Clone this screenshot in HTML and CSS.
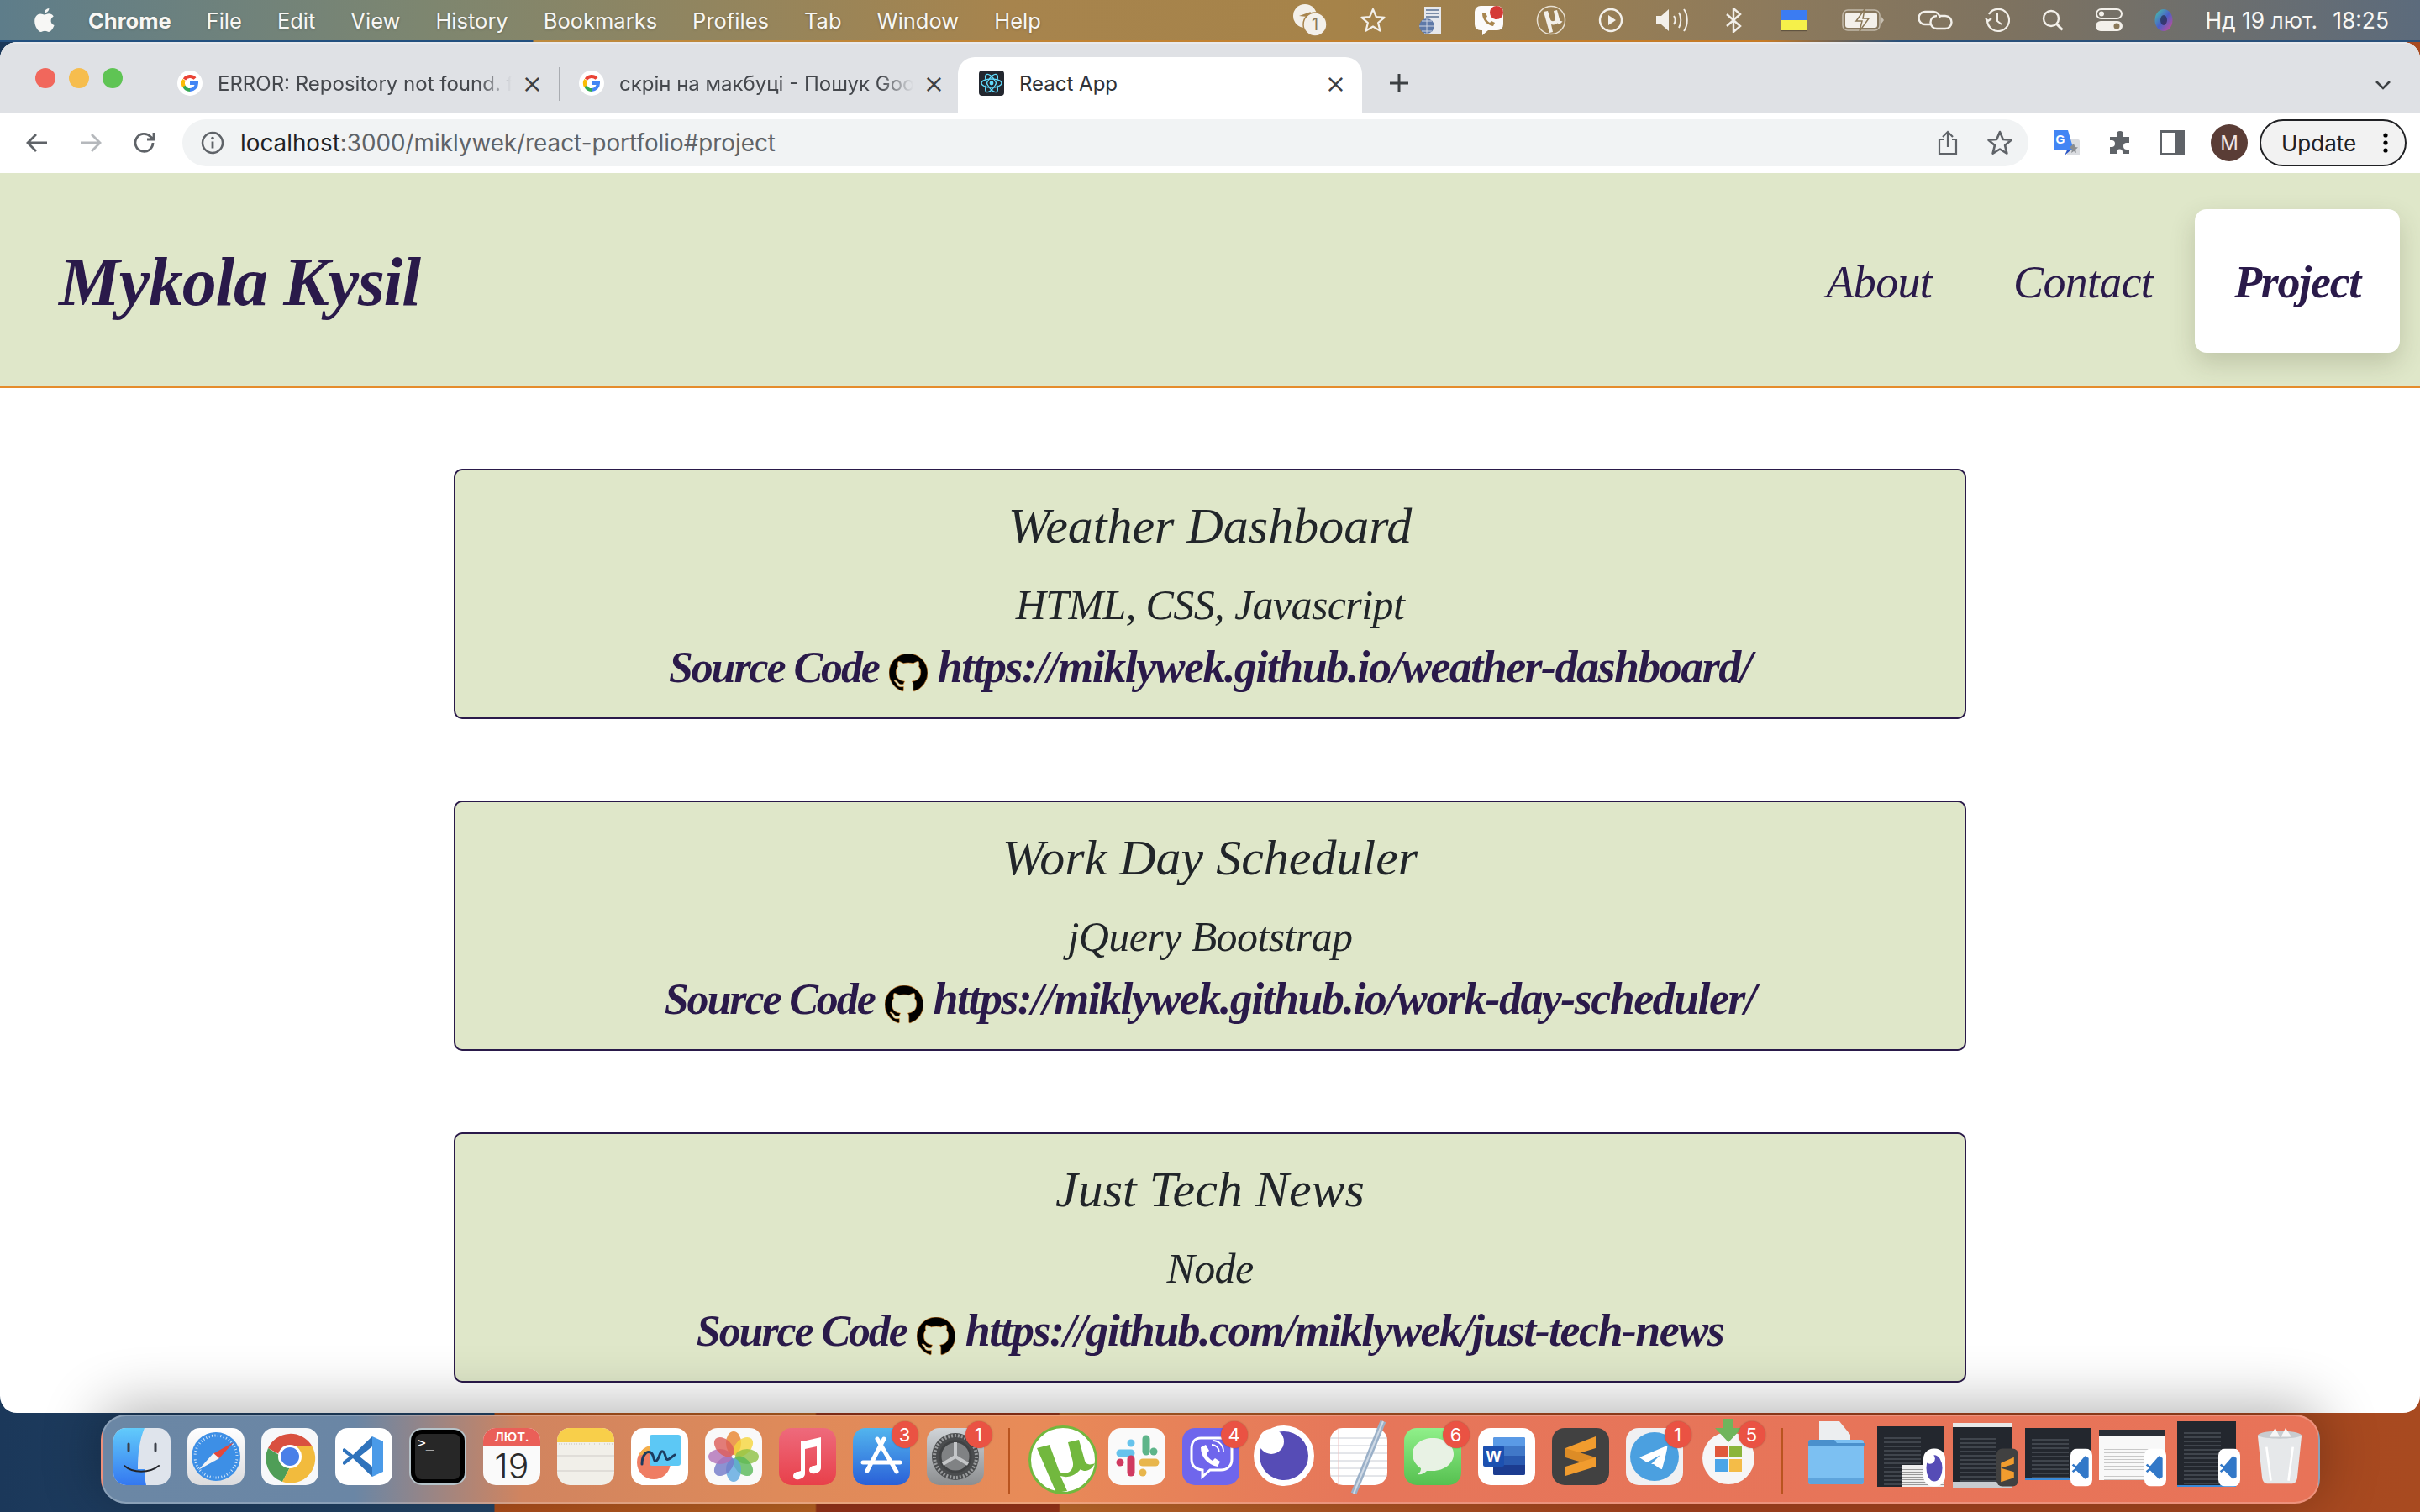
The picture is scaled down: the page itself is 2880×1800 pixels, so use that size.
FILE: index.html
```html
<!DOCTYPE html>
<html lang="en">

<head>
    <meta charset="UTF-8">
    <title>React App</title>
    <link rel="stylesheet" href="styles.css">
</head>

<body>

    <svg class="defs" width="0" height="0">
        <symbol id="gh" viewBox="0 0 16 16">
            <path d="M8 0C3.58 0 0 3.58 0 8c0 3.54 2.29 6.53 5.47 7.59.4.07.55-.17.55-.38 0-.19-.01-.82-.01-1.49-2.01.37-2.53-.49-2.69-.94-.09-.23-.48-.94-.82-1.13-.28-.15-.68-.52-.01-.53.63-.01 1.08.58 1.23.82.72 1.21 1.87.87 2.33.66.07-.52.28-.87.51-1.07-1.78-.2-3.64-.89-3.64-3.95 0-.87.31-1.59.82-2.15-.08-.2-.36-1.02.08-2.12 0 0 .67-.21 2.2.82.64-.18 1.32-.27 2-.27.68 0 1.36.09 2 .27 1.53-1.04 2.2-.82 2.2-.82.44 1.1.16 1.92.08 2.12.51.56.82 1.27.82 2.15 0 3.07-1.87 3.75-3.65 3.95.29.25.54.73.54 1.48 0 1.07-.01 1.93-.01 2.2 0 .21.15.46.55.38A8.013 8.013 0 0016 8c0-4.42-3.58-8-8-8z" fill="#000" stroke="#e58c2c" stroke-width=".22" />
        </symbol>
        <symbol id="gfav" viewBox="0 0 30 30">
            <circle cx="15" cy="15" r="15" fill="#fff" />
            <path d="M15 15h8c0 4.500-3.500 8-8 8" fill="none" stroke="#4285f4" stroke-width="4" />
            <path d="M8.500 10.500A8 8 0 0 1 21 9.500" fill="none" stroke="#ea4335" stroke-width="4" />
            <path d="M8 19a8 8 0 0 1 0-8" fill="none" stroke="#fbbc05" stroke-width="4" />
            <path d="M15 23a8 8 0 0 1-7-4.500" fill="none" stroke="#34a853" stroke-width="4" />
        </symbol>
        <symbol id="vsmini" viewBox="0 0 30 52">
            <rect width="30" height="52" rx="9" fill="#fff" />
            <path d="M20 10 8 24l-4-3-2 2 5 4-5 4 2 2 4-3 12 12 5-3V13z" fill="#3278c8" />
        </symbol>
    </svg>

    <!-- Mac menu bar -->
    <header class="menubar">
        <div class="menu-left">
            <svg class="apple" viewBox="0 0 24 28"><path d="M17 1c.2 2-1.900 5-5 5-.300-2.300 2-4.800 5-5zM12 8c1 0 2.600-1.200 4.800-1.200 2 0 4 1 5.200 2.900-4.300 2.500-3.600 8.300.8 10-1.100 3-3.500 7.300-6 7.300-1.600 0-2.400-1-4.400-1s-2.900 1-4.400 1C5 27 1 20.500 1 15.300 1 10 4.400 7 7.500 7 9.500 7 11 8 12 8z" fill="#f7f7f5" /></svg>
            <span class="menu-app">Chrome</span>
            <span>File</span>
            <span>Edit</span>
            <span>View</span>
            <span>History</span>
            <span>Bookmarks</span>
            <span>Profiles</span>
            <span>Tab</span>
            <span>Window</span>
            <span>Help</span>
        </div>
        <div class="menu-right">
            <svg class="st" width="42" height="40" viewBox="0 0 42 40"><circle cx="15" cy="15" r="14" fill="#f3f0ea" /><path d="M8 15l14-5-4 6z" fill="#a8854e" /><circle cx="27" cy="25" r="14" fill="#f3f0ea" stroke="#a8854e" stroke-width="1.500" /><text x="27" y="32" class="st-num">1</text></svg>
            <svg class="st" width="32" height="32" viewBox="0 0 32 32"><path d="M16 3l3.800 9 9.700.8-7.400 6.300 2.300 9.500-8.400-5.100-8.400 5.100 2.300-9.500L2.500 12.800l9.700-.8z" fill="none" stroke="#f3f0ea" stroke-width="2.200" stroke-linejoin="round" /></svg>
            <svg class="st" width="28" height="34" viewBox="0 0 28 34"><rect x="7" y="1" width="20" height="32" fill="#e6e8ec" /><path d="M9 5h16M9 9h16M9 13h16" stroke="#7c8ea8" stroke-width="2" /><circle cx="10" cy="24" r="9" fill="#5e79a8" /><path d="M1 24h18M10 15v18M4 18h12M4 30h12" stroke="#cfd6e2" stroke-width="1" /></svg>
            <svg class="st" width="36" height="36" viewBox="0 0 36 36"><path d="M8 1h20a7 7 0 0 1 7 7v15a7 7 0 0 1-7 7H17l-7 6v-6H8a7 7 0 0 1-7-7V8a7 7 0 0 1 7-7z" fill="#fbfafa" /><path d="M10 10c0 8 6 14 13 15l2-4-4-2-2 2c-2-1-4-3-5-6l2-1-2-5z" fill="#a8854e" /><circle cx="27" cy="9" r="8" fill="#d43a36" /></svg>
            <svg class="st" width="36" height="36" viewBox="0 0 36 36"><circle cx="18" cy="18" r="16.500" fill="none" stroke="#e8e0d2" stroke-width="1.500" /><path d="M9 8l5-1 3 10c1 3 5 3 6 0l-2-10 4-1 3 11c.5 2 1.500 2.500 3.500 2-1 3-4 4-6 2.500-2 2-5 2.500-7.500 1.500l2 9-4 1z" fill="#f3f0ea" /></svg>
            <svg class="st" width="30" height="30" viewBox="0 0 30 30"><circle cx="15" cy="15" r="13" fill="none" stroke="#f3f0ea" stroke-width="2.400" /><path d="M12 9l9 6-9 6z" fill="#f3f0ea" /></svg>
            <svg class="st" width="40" height="30" viewBox="0 0 40 30"><path d="M1 10h6l9-8v26l-9-8H1z" fill="#f3f0ea" /><path d="M22 10c2 3 2 7 0 10M28 6c3 5 3 13 0 18M34 2c5 7 5 19 0 26" fill="none" stroke="#f3f0ea" stroke-width="2" /></svg>
            <svg class="st st-bt" width="22" height="30" viewBox="0 0 22 30"><path d="M3 8l16 14-8 7V1l8 7L3 22" fill="none" stroke="#f3f0ea" stroke-width="2.400" /></svg>
            <div class="st st-flag"><span class="flag-blue"></span><span class="flag-yellow"></span></div>
            <svg class="st" width="52" height="26" viewBox="0 0 52 26"><rect x="1" y="1" width="44" height="24" rx="6" fill="none" stroke="#f3f0ea" stroke-opacity=".55" stroke-width="1.500" /><rect x="4" y="4" width="38" height="18" rx="3" fill="#f3f0ea" /><path d="M47 9v8l3-4z" fill="#f3f0ea" fill-opacity=".6" /><path d="M27 0l-10 14h7l-3 12 11-15h-7z" fill="#f3f0ea" stroke="#8a7858" stroke-width="1.500" /></svg>
            <svg class="st" width="42" height="24" viewBox="0 0 42 24"><path d="M16 17H9a7.500 7.500 0 0 1 0-15h10a7.500 7.500 0 0 1 7.500 7.500M26 7h7a7.500 7.500 0 0 1 0 15H23a7.500 7.500 0 0 1-7.500-7.500c0-4 3-7.500 7.500-7.500" fill="none" stroke="#f3f0ea" stroke-width="2.400" /></svg>
            <svg class="st" width="30" height="30" viewBox="0 0 30 30"><path d="M5 8a13 13 0 1 1-2 7M1 13l3 3 4-3" fill="none" stroke="#f3f0ea" stroke-width="2.200" /><path d="M15 7v9l5 4" fill="none" stroke="#f3f0ea" stroke-width="2" /></svg>
            <svg class="st" width="26" height="26" viewBox="0 0 26 26"><circle cx="11" cy="11" r="9" fill="none" stroke="#f3f0ea" stroke-width="2.400" /><path d="M17.500 17.500l7 7" stroke="#f3f0ea" stroke-width="3" /></svg>
            <svg class="st" width="32" height="28" viewBox="0 0 32 28"><rect x="1" y="1" width="30" height="11" rx="5.500" fill="none" stroke="#f3f0ea" stroke-width="2" /><circle cx="7" cy="6.500" r="3" fill="#f3f0ea" /><rect y="15" width="32" height="12" rx="6" fill="#f3f0ea" /><circle cx="25" cy="21" r="3.500" fill="#8a7858" /></svg>
            <svg class="st" width="22" height="32" viewBox="0 0 22 32"><defs><linearGradient id="siri" x1="0" y1="0" x2="1" y2="1"><stop offset="0" stop-color="#47c9a8" /><stop offset=".5" stop-color="#4a5fc8" /><stop offset="1" stop-color="#d84a90" /></linearGradient></defs><ellipse cx="11" cy="16" rx="10.500" ry="13" fill="url(#siri)" /><ellipse cx="11" cy="16" rx="4" ry="6" fill="#20203a" fill-opacity=".6" /></svg>
            <span class="clock">Нд 19 лют.</span>
            <span class="clock clock-time">18:25</span>
        </div>
    </header>
    <div class="menu-edge"></div>

    <!-- Browser window -->
    <main class="window">
        <div class="tabstrip">
            <div class="lights">
                <span class="light light-red"></span>
                <span class="light light-yellow"></span>
                <span class="light light-green"></span>
            </div>
            <div class="tab">
                <svg class="fav" viewBox="0 0 30 30"><use href="#gfav" /></svg>
                <span class="tab-title">ERROR: Repository not found. f</span>
                <span class="tab-x">&times;</span>
            </div>
            <span class="tab-sep"></span>
            <div class="tab">
                <svg class="fav" viewBox="0 0 30 30"><use href="#gfav" /></svg>
                <span class="tab-title">скрін на макбуці - Пошук Goo</span>
                <span class="tab-x">&times;</span>
            </div>
            <div class="tab tab-active">
                <svg class="fav" viewBox="0 0 30 30"><rect width="30" height="30" rx="4" fill="#23272f" /><g fill="none" stroke="#61dafb" stroke-width="1.300"><ellipse cx="15" cy="15" rx="12" ry="5" /><ellipse cx="15" cy="15" rx="12" ry="5" transform="rotate(60 15 15)" /><ellipse cx="15" cy="15" rx="12" ry="5" transform="rotate(120 15 15)" /></g><circle cx="15" cy="15" r="2.400" fill="#61dafb" /></svg>
                <span class="tab-title">React App</span>
                <span class="tab-x">&times;</span>
            </div>
            <svg class="new-tab" width="28" height="28" viewBox="0 0 28 28"><path d="M14 3v22M3 14h22" stroke="#3c4043" stroke-width="3" /></svg>
            <svg class="tab-list" width="20" height="12" viewBox="0 0 20 12"><path d="M2 2l8 8 8-8" fill="none" stroke="#3c4043" stroke-width="2.600" /></svg>
        </div>

        <div class="toolbar">
            <svg class="tool" width="30" height="30" viewBox="0 0 30 30"><path d="M27 15H5M14 5L4 15l10 10" fill="none" stroke="#5f6368" stroke-width="2.800" /></svg>
            <svg class="tool" width="30" height="30" viewBox="0 0 30 30"><path d="M3 15h22M16 5l10 10-10 10" fill="none" stroke="#b5b8bc" stroke-width="2.800" /></svg>
            <svg class="tool" width="30" height="30" viewBox="0 0 30 30"><path d="M25 15a10.500 10.500 0 1 1-3-7.500L26 11M26 3v8h-8" fill="none" stroke="#5f6368" stroke-width="2.800" /></svg>
            <div class="omnibox">
                <svg width="30" height="30" viewBox="0 0 30 30"><circle cx="15" cy="15" r="12" fill="none" stroke="#5f6368" stroke-width="2.500" /><path d="M15 13.500v8" stroke="#5f6368" stroke-width="2.800" /><circle cx="15" cy="9.500" r="1.800" fill="#5f6368" /></svg>
                <span class="url"><b>localhost</b>:3000/miklywek/react-portfolio#project</span>
                <svg class="omni-share" width="26" height="30" viewBox="0 0 26 30"><path d="M8 11H3v17h20V11h-5M13 20V2M7 8l6-6 6 6" fill="none" stroke="#5f6368" stroke-width="2.200" /></svg>
                <svg class="omni-star" width="32" height="32" viewBox="0 0 32 32"><path d="M16 3l3.800 9 9.700.8-7.400 6.300 2.300 9.500-8.400-5.100-8.400 5.100 2.300-9.500L2.500 12.800l9.700-.8z" fill="none" stroke="#5f6368" stroke-width="2.600" stroke-linejoin="round" /></svg>
            </div>
            <svg class="ext" width="32" height="32" viewBox="0 0 32 32"><path d="M12 12h17a2 2 0 0 1 2 2v16H16z" fill="#dadce0" /><path d="M1 1h16l7 24H1z" fill="#4285f4" /><path d="M16 25l-3 6 7-6z" fill="#2a56c6" /><text x="8" y="17" class="ext-g">G</text><path d="M24 17l1.500 4 3.500.5-3 2.500 1 4-3-2-3 2 1-4-3-2.500z" fill="#8a8d91" /></svg>
            <svg class="ext" width="30" height="30" viewBox="0 0 30 30"><path d="M11 5a4 4 0 0 1 8 0v3h7v7h-3a4 4 0 0 0 0 8h3v5h-8v-2a3.500 3.500 0 0 0-7 0v2H3v-8h2a4 4 0 0 0 0-8H3V8h8z" fill="#5f6368" /></svg>
            <div class="ext ext-side"></div>
            <div class="avatar">M</div>
            <div class="update">
                <span>Update</span>
                <svg width="6" height="24" viewBox="0 0 6 24"><circle cx="3" cy="3" r="2.600" /><circle cx="3" cy="12" r="2.600" /><circle cx="3" cy="21" r="2.600" /></svg>
            </div>
        </div>

        <!-- Page -->
        <div class="page">
            <div class="site-header">
                <h1 class="logo">Mykola Kysil</h1>
                <nav class="site-nav">
                    <a href="#about">About</a>
                    <a href="#contact">Contact</a>
                    <a href="#project" class="nav-active">Project</a>
                </nav>
            </div>

            <section class="projects">
                <article class="card">
                    <h2>Weather Dashboard</h2>
                    <p class="card-tech">HTML, CSS, Javascript</p>
                    <p class="card-links"><a href="#" class="src-link">Source Code</a> <svg class="gh" viewBox="0 0 16 16"><use href="#gh" /></svg> <a href="#">https://miklywek.github.io/weather-dashboard/</a></p>
                </article>
                <article class="card">
                    <h2>Work Day Scheduler</h2>
                    <p class="card-tech">jQuery Bootstrap</p>
                    <p class="card-links"><a href="#" class="src-link">Source Code</a> <svg class="gh" viewBox="0 0 16 16"><use href="#gh" /></svg> <a href="#">https://miklywek.github.io/work-day-scheduler/</a></p>
                </article>
                <article class="card">
                    <h2>Just Tech News</h2>
                    <p class="card-tech">Node</p>
                    <p class="card-links"><a href="#" class="src-link">Source Code</a> <svg class="gh" viewBox="0 0 16 16"><use href="#gh" /></svg> <a href="#">https://github.com/miklywek/just-tech-news</a></p>
                </article>
            </section>
        </div>
    </main>

    <!-- Dock -->
    <footer class="dock">
        <div class="dock-item"><svg viewBox="0 0 68 68"><rect width="68" height="68" rx="15" fill="#dfe4ec" /><path d="M37 0H15A15 15 0 0 0 0 15v38a15 15 0 0 0 15 15h24c-1-5-2-10-2-19H29c0-18 2-35 8-49z" fill="url(#finderBlue)" /><defs><linearGradient id="finderBlue" x1="0" y1="0" x2="0" y2="1"><stop offset="0" stop-color="#62cbfb" /><stop offset="1" stop-color="#3478f0" /></linearGradient></defs><path d="M18 19v8M50 19v8" stroke="#3a3f48" stroke-width="3" stroke-linecap="round" /><path d="M13 45c10 9 30 9 41 0" fill="none" stroke="#23252b" stroke-width="2" stroke-linecap="round" /></svg></div>
        <div class="dock-item"><svg viewBox="0 0 68 68"><defs><linearGradient id="safBg" x1="0" y1="0" x2="0" y2="1"><stop offset="0" stop-color="#fff" /><stop offset="1" stop-color="#dcdcde" /></linearGradient></defs><rect width="68" height="68" rx="15" fill="url(#safBg)" /><circle cx="34" cy="34" r="29" fill="#3d8fe6" /><circle cx="34" cy="34" r="25" fill="none" stroke="#d8e8f8" stroke-width="3" stroke-dasharray="1 2.500" /><path d="M55 17L30 31l7 6z" fill="#e5483a" /><path d="M13 50l25-14-7-6z" fill="#f4f4f4" /></svg></div>
        <div class="dock-item"><svg viewBox="0 0 68 68"><rect width="68" height="68" rx="15" fill="#f7f8fa" /><path d="M8 24a29.500 29.500 0 0 1 52-3H34a13 13 0 0 0-13 10z" fill="#d9503f" /><path d="M8 24l13 8a13 13 0 0 0 13 15l-9 17A29.500 29.500 0 0 1 8 24z" fill="#4f9e57" /><path d="M60 21a29.500 29.500 0 0 1-35 43l9-17a13 13 0 0 0 11-20l-5-6z" fill="#f2bb3d" /><circle cx="34" cy="34" r="14" fill="#fff" /><circle cx="34" cy="34" r="11" fill="#4a80e8" /></svg></div>
        <div class="dock-item"><svg viewBox="0 0 68 68"><rect width="68" height="68" rx="15" fill="#fff" /><path d="M44 10l13 6v36l-13 6z" fill="#4a9ae8" /><path d="M44 10L21 32l-10-8-2 1 0 3 8 6-8 6v3l2 1 10-8 23 22 0-12-15-12 15-12z" fill="#2f73bc" /></svg></div>
        <div class="dock-item"><svg viewBox="0 0 68 68"><rect x="0" y="0" width="68" height="68" rx="15" fill="#b6c3c9" /><rect x="2" y="2" width="64" height="64" rx="13" fill="#000" /><rect x="7" y="7" width="54" height="54" rx="8" fill="#272727" /><text x="10" y="23" class="term">&gt;_</text></svg></div>
        <div class="dock-item"><svg viewBox="0 0 68 68"><rect width="68" height="68" rx="15" fill="#fafafa" /><path d="M0 21V15A15 15 0 0 1 15 0h38a15 15 0 0 1 15 15v6z" fill="#ea5f58" /><text x="34" y="16" class="cal-month">ЛЮТ.</text><text x="34" y="60" class="cal-day">19</text></svg></div>
        <div class="dock-item"><svg viewBox="0 0 68 68"><rect width="68" height="68" rx="15" fill="#f1efe9" /><path d="M0 17V15A15 15 0 0 1 15 0h38a15 15 0 0 1 15 15v2z" fill="#f8cf4a" /><path d="M0 33h68M0 51h68" stroke="#dad8d2" stroke-width="1.500" /><path d="M2 19h64" stroke="#c4c2bc" stroke-width="1" stroke-dasharray="1 2" /></svg></div>
        <div class="dock-item"><svg viewBox="0 0 68 68"><rect width="68" height="68" rx="15" fill="#fff" /><circle cx="27" cy="41" r="20" fill="#ef7d63" /><path d="M9 33a20 20 0 0 1 14-12l3 8z" fill="#f5b04a" /><rect x="22" y="8" width="37" height="37" rx="3" fill="#5cc8f5" /><path d="M13 43c0-10 5-16 10-14s3 12 7 10 4-13 8-11 2 12 7 9 5-4 7-5" fill="none" stroke="#1c3c60" stroke-width="3" stroke-linecap="round" /></svg></div>
        <div class="dock-item"><svg viewBox="0 0 68 68"><rect width="68" height="68" rx="15" fill="#f9f9f9" /><g fill-opacity=".8"><ellipse cx="34" cy="18" rx="9" ry="14" fill="#e8832c" /><ellipse cx="34" cy="18" rx="9" ry="14" fill="#f5d63c" transform="rotate(45 34 34)" /><ellipse cx="34" cy="18" rx="9" ry="14" fill="#8dc044" transform="rotate(90 34 34)" /><ellipse cx="34" cy="18" rx="9" ry="14" fill="#58b858" transform="rotate(135 34 34)" /><ellipse cx="34" cy="18" rx="9" ry="14" fill="#5ca8e0" transform="rotate(180 34 34)" /><ellipse cx="34" cy="18" rx="9" ry="14" fill="#7078c8" transform="rotate(225 34 34)" /><ellipse cx="34" cy="18" rx="9" ry="14" fill="#b070b8" transform="rotate(270 34 34)" /><ellipse cx="34" cy="18" rx="9" ry="14" fill="#dc5c58" transform="rotate(315 34 34)" /></g></svg></div>
        <div class="dock-item"><svg viewBox="0 0 68 68"><defs><linearGradient id="musicBg" x1="0" y1="0" x2="0" y2="1"><stop offset="0" stop-color="#ee6a7c" /><stop offset="1" stop-color="#e8404a" /></linearGradient></defs><rect width="68" height="68" rx="15" fill="url(#musicBg)" /><path d="M28 16l22-5v36c0 4-3 6-7 7s-7-1-7-4 3-5 6-5l3-1V22l-14 3v29c0 4-3 6-7 7s-7-1-7-4 3-5 6-5l3-1V16z" fill="#fff" /></svg></div>
        <div class="dock-item"><svg viewBox="0 0 68 68"><defs><linearGradient id="storeBg" x1="0" y1="0" x2="0" y2="1"><stop offset="0" stop-color="#52b5ee" /><stop offset="1" stop-color="#2a60d8" /></linearGradient></defs><rect width="68" height="68" rx="15" fill="url(#storeBg)" /><path d="M37 13L17 51M29 13l23 39M12 41h44" fill="none" stroke="#fff" stroke-width="5" stroke-linecap="round" /></svg><span class="dock-badge">3</span></div>
        <div class="dock-item"><svg viewBox="0 0 68 68"><defs><linearGradient id="gearBg" x1="0" y1="0" x2="0" y2="1"><stop offset="0" stop-color="#d0d4d8" /><stop offset="1" stop-color="#8c8e90" /></linearGradient></defs><rect width="68" height="68" rx="15" fill="url(#gearBg)" /><circle cx="34" cy="34" r="28" fill="#4a4c4e" /><circle cx="34" cy="34" r="25" fill="none" stroke="#9a9c9e" stroke-width="4" stroke-dasharray="2 2" /><circle cx="34" cy="34" r="18" fill="#808284" stroke="#404244" stroke-width="3" /><path d="M34 34V17M34 34l15 9M34 34l-15 9" stroke="#c4c6c8" stroke-width="4" /></svg><span class="dock-badge">1</span></div>
        <span class="dock-sep"></span>
        <div class="dock-item"><svg class="dock-wide" viewBox="0 0 82 82"><circle cx="41" cy="41" r="39.500" fill="#fff" stroke="#72b83e" stroke-width="3" /><path d="M10 27l15-4 11 30c2 5 10 5 14 1 3-3 4-8 2-14l-5-20 13-3 7 25c1 4 5 6 12 3-3 7-11 12-17 7-7 8-15 11-24 8l8 18-13 2z" fill="#72b83e" /></svg></div>
        <div class="dock-item"><svg viewBox="0 0 68 68"><rect width="68" height="68" rx="15" fill="#fafafa" /><g fill="none" stroke-width="9" stroke-linecap="round"><path d="M45 13v15" stroke="#5eb58a" /><path d="M14 30h13" stroke="#66c3ec" /><path d="M27 18h0" stroke="#66c3ec" /><path d="M27 37v16" stroke="#d03a60" /><path d="M14 41h0" stroke="#d03a60" /><path d="M41 41h15" stroke="#e8b64c" /><path d="M41 53h0" stroke="#e8b64c" /><path d="M54 28h0" stroke="#5eb58a" /></g></svg></div>
        <div class="dock-item"><svg viewBox="0 0 68 68"><rect width="68" height="68" rx="15" fill="#6f66ec" /><path d="M22 12h24c8 0 13 5 13 13v12c0 8-5 13-13 13H33l-9 8v-8c-9-1-13-5-13-13V25c0-8 4-13 11-13z" fill="none" stroke="#fff" stroke-width="3" /><path d="M22 23c0 12 9 21 20 23l3-6-6-4-3 3c-4-2-6-5-7-9l3-3-4-7z" fill="#fff" /><path d="M35 20c5 0 9 4 9 9M36 15c8 0 13 6 13 13" fill="none" stroke="#fff" stroke-width="1.800" /></svg><span class="dock-badge">4</span></div>
        <div class="dock-item"><svg class="dock-wide-moon" viewBox="0 0 72 72"><circle cx="36" cy="36" r="36" fill="#fff" /><circle cx="36" cy="36" r="29" fill="#564cb6" /><circle cx="21" cy="19" r="15" fill="#fff" /></svg></div>
        <div class="dock-item"><svg viewBox="0 0 68 68"><rect width="68" height="68" rx="15" fill="#fff" /><path d="M0 12h68M0 21h68M0 30h68M0 39h68M0 48h68M0 57h68" stroke="#c8ccd4" stroke-width="1" /><path d="M10 0v68" stroke="#eec0c0" stroke-width="1" /><path d="M63 -8L28 78" stroke="#9ab0c8" stroke-width="7" /><path d="M63 -8L28 78" stroke="#d0dae6" stroke-width="2" /></svg></div>
        <div class="dock-item"><svg viewBox="0 0 68 68"><defs><linearGradient id="msgBg" x1="0" y1="0" x2="0" y2="1"><stop offset="0" stop-color="#90f08a" /><stop offset="1" stop-color="#56c050" /></linearGradient></defs><rect width="68" height="68" rx="15" fill="url(#msgBg)" /><path d="M34 12c14 0 25 8 25 19s-11 20-25 20c-3 0-5 0-7 0-3 3-7 5-11 4 3-2 4-4 4-7-6-4-10-10-10-17 0-11 11-19 24-19z" fill="#e8f2e4" /></svg><span class="dock-badge">6</span></div>
        <div class="dock-item"><svg viewBox="0 0 68 68"><rect width="68" height="68" rx="15" fill="#fff" /><rect x="18" y="11" width="38" height="45" rx="2" fill="#4078c8" /><path d="M18 13a2 2 0 0 1 2-2h34a2 2 0 0 1 2 2v9H18z" fill="#5a9ae6" /><rect x="18" y="33" width="38" height="11" fill="#2a5ab0" /><path d="M18 44h38v10a2 2 0 0 1-2 2H20a2 2 0 0 1-2-2z" fill="#1c3c90" /><rect x="6" y="21" width="25" height="25" rx="2" fill="#1c50b0" /><text x="18.500" y="40" class="word-w">W</text></svg></div>
        <div class="dock-item"><svg viewBox="0 0 68 68"><rect width="68" height="68" rx="15" fill="#414141" /><path d="M52 10v14L16 35V24z" fill="#f19c2e" /><path d="M16 24l36 11v11L16 35z" fill="#dd8c26" /><path d="M52 35v11L16 57V46z" fill="#f19c2e" /></svg></div>
        <div class="dock-item"><svg viewBox="0 0 68 68"><rect width="68" height="68" rx="15" fill="#f0f0f2" /><circle cx="34" cy="34" r="29" fill="#4ba0e0" /><path d="M16 35l33-14c2 0-6 28-6 28-1 1-10-6-10-6l-3 0 11-11-16 9z" fill="#fff" /></svg><span class="dock-badge">1</span></div>
        <div class="dock-item dock-ms"><svg class="dock-wide-ms" viewBox="0 0 62 78"><circle cx="31" cy="47" r="31" fill="#f6f6f6" /><rect x="15" y="32" width="15" height="14" fill="#e0583c" /><rect x="32" y="32" width="15" height="14" fill="#8bb53c" /><rect x="15" y="48" width="15" height="15" fill="#4ba5e8" /><rect x="32" y="48" width="15" height="15" fill="#f4bc48" /><path d="M25 0h12v11h10L31 28 15 11h10z" fill="#6fb55c" /></svg><span class="dock-badge">5</span></div>
        <span class="dock-sep"></span>
        <div class="dock-item"><svg viewBox="0 0 68 68"><path d="M14 -8h24l13 16v40H14z" fill="#eceef0" /><path d="M1 17a3 3 0 0 1 3-3h60a3 3 0 0 1 3 3v47a3 3 0 0 1-3 3H4a3 3 0 0 1-3-3z" fill="#7cc0f2" /><path d="M1 17a3 3 0 0 1 3-3h28l3 4h33v4H1z" fill="#4a90cc" /><path d="M1 60h66v4a3 3 0 0 1-3 3H4a3 3 0 0 1-3-3z" fill="#5ea4dc" /></svg></div>
        <div class="dock-item"><div class="thumb thumb-dark thumb-a"><div class="thumb-page"></div></div><svg class="thumb-badge thumb-moon" viewBox="0 0 30 52"><rect width="30" height="52" rx="14" fill="#fff" /><ellipse cx="15" cy="27" rx="11" ry="18" fill="#564cb6" /><circle cx="9" cy="14" r="7" fill="#fff" /></svg></div>
        <div class="dock-item"><div class="thumb thumb-dark thumb-b"></div><svg class="thumb-badge" viewBox="0 0 30 52"><rect width="30" height="52" rx="8" fill="#414141" /><path d="M24 12v9L6 27v-7zM6 27l18 5v8L6 46z" fill="#f19c2e" /></svg></div>
        <div class="dock-item"><div class="thumb thumb-dark thumb-c"></div><svg class="thumb-badge" viewBox="0 0 30 52"><use href="#vsmini" /></svg></div>
        <div class="dock-item"><div class="thumb thumb-light thumb-d"></div><svg class="thumb-badge" viewBox="0 0 30 52"><use href="#vsmini" /></svg></div>
        <div class="dock-item"><div class="thumb thumb-dark thumb-e"></div><svg class="thumb-badge" viewBox="0 0 30 52"><use href="#vsmini" /></svg></div>
        <div class="dock-item"><svg viewBox="0 0 68 78"><path d="M4 10l6 58c1 6 4 8 8 8h32c4 0 7-2 8-8l6-58z" fill="#e6e8ea" /><path d="M4 10c4-8 56-8 60 0-8 6-52 6-60 0z" fill="#c8ccd0" /><path d="M20 12l8-12 6 12zM36 12l6-12 8 12z" fill="#f6f6f6" /><path d="M16 26l6 46M52 26l-6 46" stroke="#fff" stroke-width="3" /></svg></div>
    </footer>

</body>

</html>
```

FILE: styles.css
```css
* {
    margin: 0;
    padding: 0;
    box-sizing: border-box;
}

body {
    width: 2880px;
    height: 1800px;
    overflow: hidden;
    display: flex;
    flex-direction: column;
    font-family: Inter, "Noto Sans", sans-serif;
    background: linear-gradient(90deg, #1b385a 0, #244669 588px, #b2501c 589px, #bb6423 970px, #97341a 972px, #9a3519 1260px, #c06a2a 1262px, #a8421e 2000px, #a84a20 2880px);
}

.defs {
    position: absolute;
}

/* Menu bar */
.menubar {
    height: 48px;
    flex: none;
    display: flex;
    justify-content: space-between;
    align-items: center;
    padding: 0 37px 0 40px;
    color: #f8f7f4;
    font-size: 25.5px;
    background: linear-gradient(90deg, #5e7d8a 0, #7d8670 500px, #a7844d 1200px, #a68349 1600px, #8d7a5c 2100px, #7d7260 2400px, #5c6b7c 2880px);
}

.menu-edge {
    height: 2px;
    flex: none;
    background: linear-gradient(90deg, #23507f 634px, #bd8a3e 635px, #c57a26 2100px, #2a507a 2260px);
}

.menu-left,
.menu-right {
    display: flex;
    align-items: center;
}

.menu-left {
    gap: 42px;
    text-shadow: 0 1px 3px rgba(0, 0, 0, 0.25);
}

.apple {
    width: 26px;
    height: 30px;
    margin-right: -3px;
}

.menu-app {
    font-weight: 700;
}

.menu-right {
    gap: 38px;
}

.st {
    flex: none;
}

.st-bt {
    margin: 0 4px;
}

.st-flag {
    width: 30px;
    height: 24px;
    display: flex;
    flex-direction: column;
    margin: 0 4px;
    box-shadow: 0 1px 1px rgba(0, 0, 0, 0.3);
}

.flag-blue {
    flex: 1;
    background: #3b7cf2;
}

.flag-yellow {
    flex: 1;
    background: #f5f04a;
}

.st-num {
    font-size: 20px;
    text-anchor: middle;
    fill: #8a7858;
}

.clock {
    font-size: 26.4px;
    margin-right: -20px;
    white-space: nowrap;
}

.clock-time {
    margin-right: 0;
}

/* Window */
.window {
    height: 1632px;
    flex: none;
    background: #fff;
    border-radius: 20px;
    overflow: hidden;
    display: flex;
    flex-direction: column;
}

.tabstrip {
    height: 84px;
    flex: none;
    display: flex;
    align-items: flex-end;
    padding-left: 42px;
    background: #dfe1e5;
    border-top: 2px solid #e8e9ec;
    position: relative;
}

.lights {
    display: flex;
    gap: 16px;
    align-self: flex-start;
    margin: 29px 0 0 0;
    width: 157px;
}

.light {
    width: 24px;
    height: 24px;
    border-radius: 50%;
}

.light-red {
    background: #f1675c;
}

.light-yellow {
    background: #f6bd4e;
}

.light-green {
    background: #5fc454;
}

.tab {
    width: 456px;
    height: 66px;
    display: flex;
    align-items: center;
    gap: 18px;
    padding: 0 0 4px 12px;
    font-size: 24px;
    color: #45484d;
    white-space: nowrap;
}

.tab-sep {
    width: 2px;
    height: 40px;
    margin: 0 10px 14px 10px;
    flex: none;
    background: #a9acb1;
}

.fav {
    width: 30px;
    height: 30px;
    flex: none;
}

.tab-title {
    width: 350px;
    flex: none;
    -webkit-mask-image: linear-gradient(90deg, #000 310px, transparent 350px);
    mask-image: linear-gradient(90deg, #000 310px, transparent 350px);
}

.tab-x {
    font-size: 38px;
    line-height: 1;
    font-weight: 300;
    color: #3c4043;
    margin: -5px 0 0 -6px;
}

.tab-active {
    width: 481px;
    margin-left: 7px;
    padding-left: 25px;
    background: #fff;
    border-radius: 20px 20px 0 0;
    color: #303236;
}

.tab-active .tab-title {
    width: 346px;
    -webkit-mask-image: none;
    mask-image: none;
}

.tab-active .tab-x {
    margin-left: 0;
}

.new-tab {
    margin: 0 0 21px 30px;
}

.tab-list {
    position: absolute;
    right: 34px;
    top: 43px;
}

.toolbar {
    height: 72px;
    flex: none;
    display: flex;
    align-items: center;
    padding-left: 29px;
    background: #fff;
}

.tool {
    margin-right: 34px;
    flex: none;
}

.omnibox {
    width: 2197px;
    height: 56px;
    margin-left: -4px;
    flex: none;
    border-radius: 28px;
    background: #f1f3f4;
    display: flex;
    align-items: center;
    padding: 0 18px 0 21px;
    gap: 18px;
    font-size: 27.8px;
    color: #5f6368;
}

.url {
    flex: 1;
    white-space: nowrap;
}

.url b {
    font-weight: 400;
    color: #202124;
}

.omni-share {
    margin-right: 15px;
}

.ext {
    flex: none;
    margin-right: 32px;
}

.omnibox + .ext {
    margin-left: 30px;
}

.ext-g {
    font: 700 14px "Liberation Sans", sans-serif;
    fill: #fff;
    text-anchor: middle;
}

.ext-side {
    width: 30px;
    height: 30px;
    border: 3px solid #5f6368;
    border-right-width: 11px;
}

.avatar {
    width: 44px;
    height: 44px;
    margin-left: -1px;
    flex: none;
    border-radius: 50%;
    background: #5a3d36;
    color: #f1e6e2;
    font-size: 24px;
    display: flex;
    align-items: center;
    justify-content: center;
}

.update {
    width: 175px;
    height: 56px;
    margin-left: 14px;
    flex: none;
    border: 2px solid #202124;
    border-radius: 28px;
    background: #f2f2f2;
    display: flex;
    align-items: center;
    justify-content: space-between;
    padding: 0 20px 0 24px;
    font-size: 26px;
    color: #202124;
}

/* Page */
.page {
    flex: 1;
    font-family: "Liberation Serif", "Noto Sans", serif;
    font-style: italic;
}

.site-header {
    height: 256px;
    display: flex;
    justify-content: space-between;
    align-items: center;
    padding: 0 24px 0 70px;
    background: #dfe7c9;
    border-bottom: 3px solid #e58c2c;
}

.logo {
    font-size: 82px;
    font-weight: 700;
    letter-spacing: -1.2px;
    padding-top: 6px;
    color: #2a1a4a;
}

.site-nav {
    display: flex;
    gap: 3px;
    margin-top: 4px;
}

.site-nav a {
    height: 171px;
    display: flex;
    align-items: center;
    padding: 2px 47px 0;
    font-size: 54px;
    letter-spacing: -0.7px;
    color: #2a1a4a;
    text-decoration: none;
    border-radius: 14px;
}

.site-nav .nav-active {
    font-weight: 700;
    letter-spacing: -1.3px;
    background: #fff;
    box-shadow: 0 12px 30px rgba(60, 60, 30, 0.2);
}

.projects {
    display: flex;
    flex-direction: column;
    gap: 97px;
    padding-top: 96px;
    align-items: center;
}

.card {
    width: 1800px;
    height: 298px;
    background: #dfe7c9;
    border: 2px solid #2a1a4a;
    border-radius: 10px;
    text-align: center;
    color: #212529;
}

.card h2 {
    font-size: 60px;
    font-weight: 400;
    line-height: 72px;
    margin-top: 30px;
}

.card-tech {
    font-size: 50px;
    letter-spacing: -0.6px;
    line-height: 64px;
    margin-top: 26px;
}

.card-links {
    font-size: 54px;
    font-weight: 700;
    letter-spacing: -1.55px;
    line-height: 68px;
    margin-top: 8px;
}

.card-links a {
    color: #2a1a4a;
    text-decoration: none;
}

.card-links .src-link {
    font-size: 52px;
    letter-spacing: -2.1px;
}

.gh {
    width: 46px;
    height: 46px;
    vertical-align: -12px;
}

/* Dock */
.dock {
    align-self: center;
    width: 2641px;
    height: 106px;
    margin-top: 2px;
    flex: none;
    display: flex;
    gap: 20px;
    padding: 14px 13px 0;
    border: 2px solid rgba(255, 255, 255, 0.22);
    border-radius: 30px;
    background: linear-gradient(90deg, #6b87a5 0, #6a86a5 300px, #d1845f 500px, #de8a5a 800px, #e88b58 1100px, #e6765a 1500px, #e87358 2641px);
    box-shadow: 0 -8px 70px rgba(0, 0, 0, 0.32);
    position: relative;
}

.dock-item {
    width: 68px;
    height: 68px;
    flex: none;
    position: relative;
}

.dock-item > svg {
    width: 68px;
    height: 68px;
    overflow: visible;
    display: block;
}

.dock-item > .dock-wide {
    width: 82px;
    height: 82px;
    margin: -3px 0 0 -7px;
}

.dock-item > .dock-wide-moon {
    width: 72px;
    height: 72px;
    margin: -3px 0 0 -3px;
}

.dock-item > .dock-wide-ms {
    width: 62px;
    height: 78px;
    margin: -11px 0 0 3px;
}

.dock-badge {
    position: absolute;
    left: 46px;
    top: -8px;
    width: 32px;
    height: 32px;
    border-radius: 50%;
    background: #ea5243;
    color: #fff;
    font-size: 22px;
    display: flex;
    align-items: center;
    justify-content: center;
    box-shadow: 0 0 2px rgba(0, 0, 0, 0.3);
}

.dock-sep {
    width: 2px;
    height: 78px;
    margin: 0 9px;
    flex: none;
    background: #b9541f;
}

.term {
    font: 400 16px "DejaVu Sans Mono", monospace;
    fill: #fff;
}

.cal-month {
    font: 600 15px Inter, sans-serif;
    fill: #fff;
    text-anchor: middle;
}

.cal-day {
    font: 300 41px Inter, sans-serif;
    fill: #2b2b2b;
    text-anchor: middle;
}

.word-w {
    font: 700 19px "Liberation Sans", sans-serif;
    fill: #fff;
    text-anchor: middle;
}

.thumb {
    position: absolute;
    left: -5px;
    top: 0;
    width: 79px;
    height: 62px;
}

.thumb-dark {
    background:
        repeating-linear-gradient(180deg, transparent 0, transparent 3px, rgba(180, 190, 200, 0.2) 3px, rgba(180, 190, 200, 0.2) 5px) 8px 10px / 44px 100% no-repeat,
        #23272e;
}

.thumb-light {
    background:
        repeating-linear-gradient(180deg, transparent 0, transparent 3px, rgba(90, 90, 90, 0.3) 3px, rgba(90, 90, 90, 0.3) 4px) 6px 12px / 60px 100% no-repeat,
        #f8f8f8;
    border-top: 8px solid #2a2e36;
}

.thumb-a {
    height: 72px;
    top: -2px;
}

.thumb-page {
    position: absolute;
    right: 0;
    bottom: 0;
    width: 50px;
    height: 26px;
    background: repeating-linear-gradient(180deg, #eee 0, #eee 2px, #999 2px, #999 3px);
}

.thumb-b {
    height: 78px;
    top: -6px;
    left: -3px;
    width: 70px;
    border-top: 5px solid #e8e8e8;
    border-bottom: 8px solid #c8ccd0;
}

.thumb-c {
    height: 62px;
    border-bottom: 3px solid #3a8ad8;
}

.thumb-d {
    height: 60px;
    top: 2px;
}

.thumb-e {
    left: 0;
    width: 70px;
    height: 78px;
    top: -8px;
    border-bottom: 2px solid #3a8ad8;
}

.dock-item > .thumb-badge {
    position: absolute;
    width: 26px;
    height: 46px;
    left: 49px;
    top: 24px;
}

.dock-item > .thumb-moon {
    left: 50px;
}
```
